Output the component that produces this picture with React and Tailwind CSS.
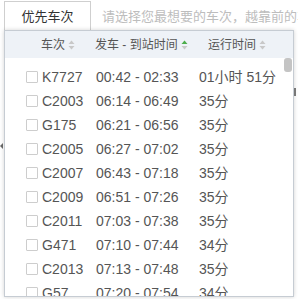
import React from "react";

const rows = [
  ["K7727", "00:42 - 02:33", "01小时 51分"],
  ["C2003", "06:14 - 06:49", "35分"],
  ["G175", "06:21 - 06:56", "35分"],
  ["C2005", "06:27 - 07:02", "35分"],
  ["C2007", "06:43 - 07:18", "35分"],
  ["C2009", "06:51 - 07:26", "35分"],
  ["C2011", "07:03 - 07:38", "35分"],
  ["G471", "07:10 - 07:44", "34分"],
  ["C2013", "07:13 - 07:48", "35分"],
  ["G57", "07:20 - 07:54", "34分"],
];

function Sort({ active }) {
  return (
    <svg width="7" height="10" viewBox="0 0 7 10" className="shrink-0">
      <path d="M3.5 0.5 L6.5 4 L0.5 4 Z" fill={active ? "#4cae4c" : "#c8c8c8"} />
      <path d="M3.5 9.5 L6.5 6 L0.5 6 Z" fill="#c8c8c8" />
    </svg>
  );
}

export default function App() {
  return (
    <div
      className="relative w-[298px] h-[299px] overflow-hidden bg-white"
      style={{ fontFamily: '"Liberation Sans", "Noto Sans CJK SC", sans-serif' }}
    >
      {/* top bar */}
      <div className="flex h-[30px] pl-[4px]">
        <div className="w-[87px] h-[30px] mt-[1px] border border-b-0 border-[#cfcfcf] bg-white flex items-center justify-center text-[13px] text-[#333]">
          优先车次
        </div>
        <div className="flex-1 flex items-center pl-[11px] pt-[3px] text-[13px] text-[#bdbdbd] whitespace-nowrap overflow-hidden">
          请选择您最想要的车次，越靠前的车次优先级越高
        </div>
      </div>

      {/* dropdown */}
      <div className="relative ml-[4px] w-[290px] h-[267px] border border-[#c6ccd3] bg-white shadow-[0_0_4px_rgba(0,0,0,0.18)] flex flex-col">
        <div className="h-[27px] shrink-0 bg-[#eef2f7] flex items-center text-[12px] text-[#555]">
          <div className="w-[90px] pl-[36px] flex items-center gap-[3px]">
            <span>车次</span>
            <Sort />
          </div>
          <div className="w-[113px] flex items-center gap-[3px] whitespace-nowrap">
            <span>发车 - 到站时间</span>
            <Sort active />
          </div>
          <div className="flex items-center gap-[3px]">
            <span>运行时间</span>
            <Sort />
          </div>
        </div>
        <div className="flex-1 flex overflow-hidden">
          <div className="flex-1 pt-[7px] text-[14px] text-[#555]">
            {rows.map(([code, time, dur]) => (
              <div key={code} className="h-[24px] flex items-center whitespace-nowrap">
                <div className="w-[91px] pl-[21px] flex items-center gap-[4px]">
                  <span className="w-[12px] h-[12px] border border-[#cdcdcd] rounded-[1px] bg-white shrink-0" />
                  <span>{code}</span>
                </div>
                <div className="w-[103px]">{time}</div>
                <div>{dur}</div>
              </div>
            ))}
          </div>
          <div className="w-[8px] mr-[1px] shrink-0">
            <div className="h-[14px] w-[8px] rounded-[3px] bg-[#c4c4c4]" />
          </div>
        </div>
      </div>

      {/* glimpses of the page behind the dropdown */}
      <div className="absolute left-0 top-[143px] w-0 h-0 border-y-[3px] border-y-transparent border-r-[3px] border-r-[#666]" />
      <div className="absolute left-[294px] top-[88px] w-[2px] h-[8px] bg-[#777]" />
    </div>
  );
}
